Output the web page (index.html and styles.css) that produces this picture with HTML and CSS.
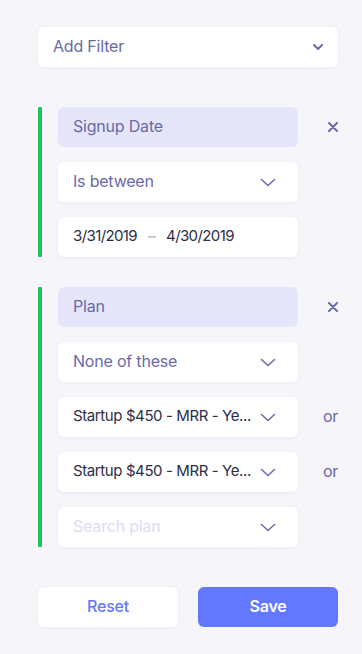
FILE: index.html
```html
<!DOCTYPE html>
<html>
<head>
<meta charset="utf-8">
<link rel="stylesheet" href="styles.css">
</head>
<body>
<div class="page">
  <div class="box add-filter">
    <span>Add Filter</span>
    <svg class="chev-bold" width="10" height="6" viewBox="0 0 10 6"><path d="M1 1l4 4 4-4" fill="none" stroke="#6a6aa8" stroke-width="2" stroke-linecap="round" stroke-linejoin="round"/></svg>
  </div>

  <div class="group">
    <div class="bar"></div>
    <div class="rows">
      <div class="row">
        <div class="box head">Signup Date</div>
        <div class="side"><svg width="10" height="10" viewBox="0 0 10 10"><path d="M1 1l8 8M9 1l-8 8" stroke="#6a6aa8" stroke-width="2" stroke-linecap="round"/></svg></div>
      </div>
      <div class="row">
        <div class="box sel"><span class="label">Is between</span><svg class="chev" width="16" height="9" viewBox="0 0 16 9"><path d="M1.5 1.5l6.5 6 6.5-6" fill="none" stroke="#6a6aa8" stroke-width="1.5" stroke-linecap="round" stroke-linejoin="round"/></svg></div>
        <div class="side"></div>
      </div>
      <div class="row">
        <div class="box date"><span class="dark num">3/31/2019</span><span class="dash"></span><span class="dark num">4/30/2019</span></div>
        <div class="side"></div>
      </div>
    </div>
  </div>

  <div class="group">
    <div class="bar"></div>
    <div class="rows">
      <div class="row">
        <div class="box head">Plan</div>
        <div class="side"><svg width="10" height="10" viewBox="0 0 10 10"><path d="M1 1l8 8M9 1l-8 8" stroke="#6a6aa8" stroke-width="2" stroke-linecap="round"/></svg></div>
      </div>
      <div class="row">
        <div class="box sel"><span class="label">None of these</span><svg class="chev" width="16" height="9" viewBox="0 0 16 9"><path d="M1.5 1.5l6.5 6 6.5-6" fill="none" stroke="#6a6aa8" stroke-width="1.5" stroke-linecap="round" stroke-linejoin="round"/></svg></div>
        <div class="side"></div>
      </div>
      <div class="row">
        <div class="box sel"><span class="dark tight">Startup $450 - MRR - Ye...</span><svg class="chev" width="16" height="9" viewBox="0 0 16 9"><path d="M1.5 1.5l6.5 6 6.5-6" fill="none" stroke="#6a6aa8" stroke-width="1.5" stroke-linecap="round" stroke-linejoin="round"/></svg></div>
        <div class="side or">or</div>
      </div>
      <div class="row">
        <div class="box sel"><span class="dark tight">Startup $450 - MRR - Ye...</span><svg class="chev" width="16" height="9" viewBox="0 0 16 9"><path d="M1.5 1.5l6.5 6 6.5-6" fill="none" stroke="#6a6aa8" stroke-width="1.5" stroke-linecap="round" stroke-linejoin="round"/></svg></div>
        <div class="side or">or</div>
      </div>
      <div class="row">
        <div class="box sel"><span class="ph">Search plan</span><svg class="chev" width="16" height="9" viewBox="0 0 16 9"><path d="M1.5 1.5l6.5 6 6.5-6" fill="none" stroke="#6a6aa8" stroke-width="1.5" stroke-linecap="round" stroke-linejoin="round"/></svg></div>
        <div class="side"></div>
      </div>
    </div>
  </div>

  <div class="buttons">
    <div class="btn reset">Reset</div>
    <div class="btn save">Save</div>
  </div>
</div>
</body>
</html>
```
FILE: styles.css
```css
* { box-sizing: border-box; }
html, body { margin: 0; padding: 0; }
body {
  background: #f5f5fa;
  font-family: Inter, "Noto Sans", sans-serif;
  font-size: 16px;
  letter-spacing: -0.2px;
  width: 362px;
  height: 654px;
  overflow: hidden;
}
.page {
  padding: 27px 24px 0 38px;
  display: flex;
  flex-direction: column;
}
.box {
  height: 40px;
  background: #fff;
  border-radius: 6px;
  display: flex;
  align-items: center;
  padding: 0 15px 3px;
  box-shadow: 0 1px 4px rgba(60, 60, 120, 0.06);
}
.add-filter {
  width: 300px;
  justify-content: space-between;
  color: #6a6aa8;
  padding-right: 15px;
}
.add-filter svg { margin-top: 3px; }
.group {
  display: flex;
  margin-top: 40px;
}
.group + .group { margin-top: 30px; }
.bar {
  width: 4px;
  background: #1dc55a;
  border-radius: 1px;
  margin-right: 16px;
}
.rows {
  display: flex;
  flex-direction: column;
  gap: 15px;
}
.row { display: flex; align-items: center; }
.row .box { width: 240px; }
.side {
  width: 40px;
  display: flex;
  justify-content: center;
  align-items: center;
  color: #6a6aa8;
  padding-left: 30px;
}
.or { font-size: 16px; padding-left: 25px; padding-bottom: 3px; }
.head {
  background: #e6e6fb;
  color: #6a6aa8;
  box-shadow: none;
}
.sel { justify-content: space-between; padding-right: 22px; }
.sel .chev { margin-top: 3px; }
.label { color: #6a6aa8; }
.dark { color: #2d2d48; white-space: nowrap; }
.num { font-size: 15px; letter-spacing: -0.6px; }
.tight { font-size: 15px; letter-spacing: -0.4px; }
.ph { color: #dcdcf6; }
.chev { flex: none; }
.dash {
  width: 8px;
  height: 1.5px;
  background: #c9c9e2;
  margin: 3px 10px 0 11px;
}
.buttons {
  display: flex;
  gap: 20px;
  margin-top: 40px;
}
.btn {
  width: 140px;
  height: 40px;
  border-radius: 6px;
  display: flex;
  align-items: center;
  justify-content: center;
  font-size: 16px;
  padding-bottom: 3px;
}
.reset { background: #fff; color: #6478ff; font-weight: 500; box-shadow: 0 1px 4px rgba(60, 60, 120, 0.06); }
.save { background: #6478ff; color: #fff; font-weight: 600; }
```
